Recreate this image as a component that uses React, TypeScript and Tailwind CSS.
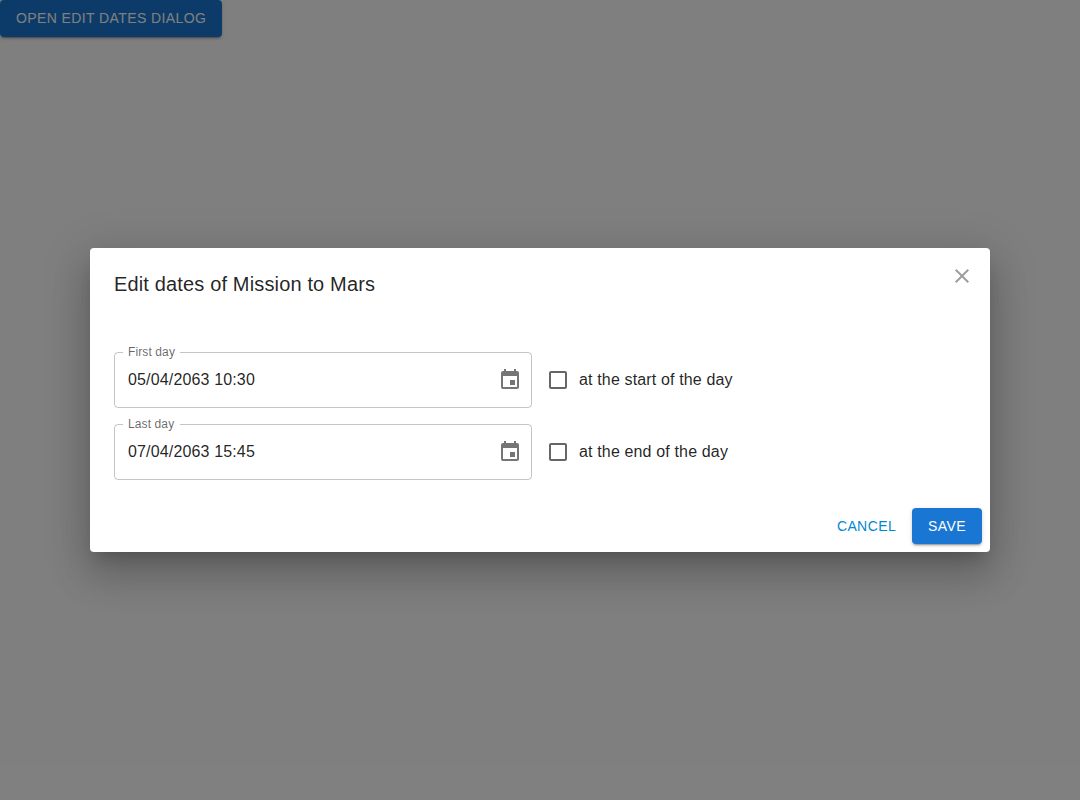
import React from "react";

const shadowButton =
  "shadow-[0px_3px_1px_-2px_rgba(0,0,0,0.2),0px_2px_2px_0px_rgba(0,0,0,0.14),0px_1px_5px_0px_rgba(0,0,0,0.12)]";

function DateField({ label, value, legendWidth }: { label: string; value: string; legendWidth: string }) {
  return (
    <div className="relative flex h-14 w-[418px] items-center pl-[14px] pr-[10px]">
      <fieldset className="pointer-events-none absolute -top-[5px] bottom-0 left-0 right-0 m-0 min-w-0 rounded border border-black/[0.23] px-2">
        <legend className={`invisible block h-[11px] p-0 ${legendWidth}`} />
      </fieldset>
      <span className="absolute left-[14px] -top-2 text-[12px] leading-[17px] tracking-[0.1125px] text-black/60">{label}</span>
      <input
        aria-label={label}
        defaultValue={value}
        className="mb-px min-w-0 flex-1 bg-transparent text-[16px] leading-[23px] tracking-[0.15px] text-black/[0.87] outline-none"
      />
      <button aria-label="Choose date" className="flex">
        <svg className="size-6 fill-black/[0.54]" viewBox="0 0 24 24">
          <path d="M17 12h-5v5h5v-5zM16 1v2H8V1H6v2H5c-1.11 0-1.99.9-1.99 2L3 19c0 1.1.89 2 2 2h14c1.1 0 2-.9 2-2V5c0-1.1-.9-2-2-2h-1V1h-2zm3 18H5V8h14v11z" />
        </svg>
      </button>
    </div>
  );
}

function CheckOption({ label }: { label: string }) {
  return (
    <label className="flex items-center gap-[9px] text-[16px] leading-6 tracking-[0.15px] text-black/[0.87]">
      <svg className="size-6 fill-black/60" viewBox="0 0 24 24">
        <path d="M19 5v14H5V5h14m0-2H5c-1.1 0-2 .9-2 2v14c0 1.1.9 2 2 2h14c1.1 0 2-.9 2-2V5c0-1.1-.9-2-2-2z" />
      </svg>
      {label}
    </label>
  );
}

export default function App() {
  return (
    <div className="relative h-screen overflow-hidden bg-white font-['Liberation_Sans',Arial,sans-serif]">
      <button className={`flex h-[36.5px] items-center rounded bg-[#1976d2] px-4 text-[14px] leading-[24.5px] tracking-[0.4px] text-white ${shadowButton}`}>
        OPEN EDIT DATES DIALOG
      </button>
      <div className="absolute inset-0 flex items-center justify-center bg-black/50">
        <section
          role="dialog"
          className="flex h-[304px] w-[900px] flex-col rounded bg-white shadow-[0px_11px_15px_-7px_rgba(0,0,0,0.2),0px_24px_38px_3px_rgba(0,0,0,0.14),0px_9px_46px_8px_rgba(0,0,0,0.12)]"
        >
          <header className="flex h-[104px] items-start justify-between pl-6 pr-4">
            <h2 className="pt-5 text-[20px] font-medium leading-8 tracking-[0.15px] text-black/[0.87]">Edit dates of Mission to Mars</h2>
            <button aria-label="Close" className="pt-4">
              <svg className="size-6 fill-[#9e9e9e]" viewBox="0 0 24 24">
                <path d="M19 6.41 17.59 5 12 10.59 6.41 5 5 6.41 10.59 12 5 17.59 6.41 19 12 13.41 17.59 19 19 17.59 13.41 12z" />
              </svg>
            </button>
          </header>
          <div className="flex flex-col gap-4 px-6">
            <div className="flex items-center gap-[14px]">
              <DateField label="First day" value="05/04/2063 10:30" legendWidth="w-[57px]" />
              <CheckOption label="at the start of the day" />
            </div>
            <div className="flex items-center gap-[14px]">
              <DateField label="Last day" value="07/04/2063 15:45" legendWidth="w-[57px]" />
              <CheckOption label="at the end of the day" />
            </div>
          </div>
          <footer className="mt-auto flex items-center justify-end gap-2 p-2 text-[14px] leading-[24.5px] tracking-[0.4px]">
            <button className="px-2 text-[#0288d1]">CANCEL</button>
            <button className={`flex h-9 items-center rounded bg-[#1976d2] px-4 text-white ${shadowButton}`}>SAVE</button>
          </footer>
        </section>
      </div>
    </div>
  );
}
